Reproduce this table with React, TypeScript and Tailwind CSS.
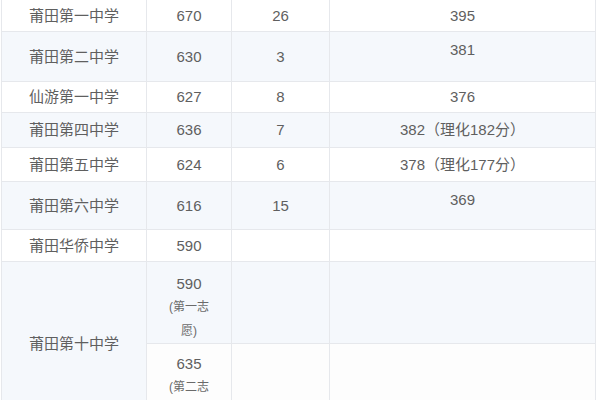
const rows = [
  { school: "莆田第一中学", score: "670", count: "26", line: "395", h: "h-[32px]", top: false },
  { school: "莆田第二中学", score: "630", count: "3", line: "381", h: "h-[50px]", top: true },
  { school: "仙游第一中学", score: "627", count: "8", line: "376", h: "h-[31px]", top: false },
  { school: "莆田第四中学", score: "636", count: "7", line: "382（理化182分）", h: "h-[35px]", top: false },
  { school: "莆田第五中学", score: "624", count: "6", line: "378（理化177分）", h: "h-[34px]", top: false },
  { school: "莆田第六中学", score: "616", count: "15", line: "369", h: "h-[48px]", top: true },
  { school: "莆田华侨中学", score: "590", count: "", line: "", h: "h-[32px]", top: false },
];

const cell = "border border-[#e6e8ec] text-center align-middle p-0";

export default function App() {
  return (
    <div
      className="h-[400px] w-[600px] overflow-hidden bg-white pl-[1px] text-[15px] leading-[22px] text-[#5f5f5f]"
      style={{ fontFamily: '"Liberation Sans", "Noto Sans CJK SC", sans-serif' }}
    >
      <table className="-mt-[1px] w-[594px] table-fixed border-collapse">
        <colgroup>
          <col className="w-[145px]" />
          <col className="w-[85px]" />
          <col className="w-[98px]" />
          <col className="w-[266px]" />
        </colgroup>
        <tbody>
          {rows.map((r, i) => (
            <tr key={r.school} className={`${r.h} ${i % 2 === 1 ? "bg-[#f5f8fc]" : "bg-white"}`}>
              <td className={cell}>{r.school}</td>
              <td className={cell}>{r.score}</td>
              <td className={cell}>{r.count}</td>
              <td className={`${cell} ${r.top ? "align-top pt-[7px]" : ""}`}>{r.line}</td>
            </tr>
          ))}
          <tr className="h-[82px] bg-[#f5f8fc]">
            <td rowSpan={2} className={`${cell} bg-[#f5f8fc]`}>
              莆田第十中学
            </td>
            <td className={`${cell} align-top px-[20px] pt-[11px]`}>
              <div>590</div>
              <div className="text-[12px] leading-[24px] text-[#6a6a6a]">(第一志愿)</div>
            </td>
            <td className={cell}></td>
            <td className={cell}></td>
          </tr>
          <tr className="h-[82px] bg-[#fdfdfd]">
            <td className={`${cell} align-top px-[20px] pt-[9px]`}>
              <div>635</div>
              <div className="text-[12px] leading-[24px] text-[#6a6a6a]">(第二志愿)</div>
            </td>
            <td className={cell}></td>
            <td className={cell}></td>
          </tr>
        </tbody>
      </table>
    </div>
  );
}
